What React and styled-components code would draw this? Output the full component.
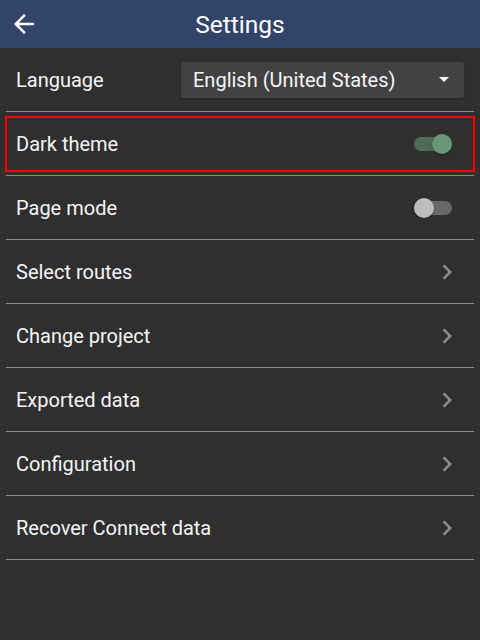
import React from "react";
import styled, { createGlobalStyle } from "styled-components";

const Global = createGlobalStyle`
  html, body { margin: 0; padding: 0; background: #2f2f2f; }
  body { font-family: Roboto, "Noto Sans", sans-serif; }
  #root { min-height: 640px; background: #2f2f2f; }
`;

const Page = styled.div`
  width: 480px;
  height: 640px;
  background: #2f2f2f;
  color: #fafafa;
  display: flex;
  flex-direction: column;
`;

const Header = styled.header`
  height: 48px;
  background: #32446a;
  display: grid;
  grid-template-columns: 48px 1fr 48px;
  align-items: center;
`;

const BackButton = styled.div`
  display: flex;
  align-items: center;
  justify-content: center;
  width: 48px;
  height: 48px;
`;

const Title = styled.h1`
  margin: 0;
  text-align: center;
  font-size: 24.5px;
  font-weight: 400;
  color: #ffffff;
`;

const List = styled.div`
  display: flex;
  flex-direction: column;
  padding: 0 6px;
`;

const Row = styled.div`
  position: relative;
  height: 63px;
  border-bottom: 1px solid #8a8a8a;
  display: flex;
  align-items: center;
  justify-content: space-between;
  padding: 0 10px;
`;

const Highlight = styled.div`
  position: absolute;
  left: -1px;
  right: -1px;
  top: 4px;
  bottom: 3px;
  border: 2px solid #ff0000;
  pointer-events: none;
`;

const Label = styled.span`
  font-size: 20px;
  color: #f5f5f5;
`;

const Select = styled.div`
  width: 283px;
  height: 36px;
  box-sizing: border-box;
  background: #424242;
  border-radius: 3px;
  display: flex;
  align-items: center;
  justify-content: space-between;
  padding: 0 15px 0 12px;
  font-size: 20px;
  color: #f5f5f5;
  box-shadow: 0 1px 2px rgba(0, 0, 0, 0.25);
`;

const Caret = styled.span`
  width: 0;
  height: 0;
  border-left: 5px solid transparent;
  border-right: 5px solid transparent;
  border-top: 5px solid #f5f5f5;
`;

const Track = styled.div`
  position: relative;
  width: 38px;
  height: 14px;
  border-radius: 7px;
  background: ${(p) => (p.$on ? "#4f6b58" : "#686868")};
  margin-right: 12px;
`;

const Thumb = styled.div`
  position: absolute;
  top: -3px;
  ${(p) => (p.$on ? "right: 0;" : "left: 0;")}
  width: 20px;
  height: 20px;
  border-radius: 50%;
  background: ${(p) => (p.$on ? "#699877" : "#bdbdbd")};
  box-shadow: 0 1px 2px rgba(0, 0, 0, 0.35);
`;

const Chevron = styled.svg`
  width: 30px;
  height: 30px;
  margin-right: 2px;
`;

function Toggle({ on }) {
  return (
    <Track $on={on}>
      <Thumb $on={on} />
    </Track>
  );
}

function Arrow() {
  return (
    <Chevron viewBox="0 0 24 24">
      <path d="M8.59 16.59L13.17 12 8.59 7.41 10 6l6 6-6 6z" fill="#8d8d8d" />
    </Chevron>
  );
}

const navItems = [
  "Select routes",
  "Change project",
  "Exported data",
  "Configuration",
  "Recover Connect data",
];

export default function App() {
  return (
    <Page>
      <Global />
      <Header>
        <BackButton>
          <svg width="30" height="30" viewBox="0 0 24 24">
            <path d="M20 11H7.83l5.59-5.59L12 4l-8 8 8 8 1.41-1.41L7.83 13H20v-2z" fill="#ffffff" />
          </svg>
        </BackButton>
        <Title>Settings</Title>
        <span />
      </Header>
      <List>
        <Row>
          <Label>Language</Label>
          <Select>
            <span>English (United States)</span>
            <Caret />
          </Select>
        </Row>
        <Row>
          <Highlight />
          <Label>Dark theme</Label>
          <Toggle on />
        </Row>
        <Row>
          <Label>Page mode</Label>
          <Toggle on={false} />
        </Row>
        {navItems.map((t) => (
          <Row key={t}>
            <Label>{t}</Label>
            <Arrow />
          </Row>
        ))}
      </List>
    </Page>
  );
}
